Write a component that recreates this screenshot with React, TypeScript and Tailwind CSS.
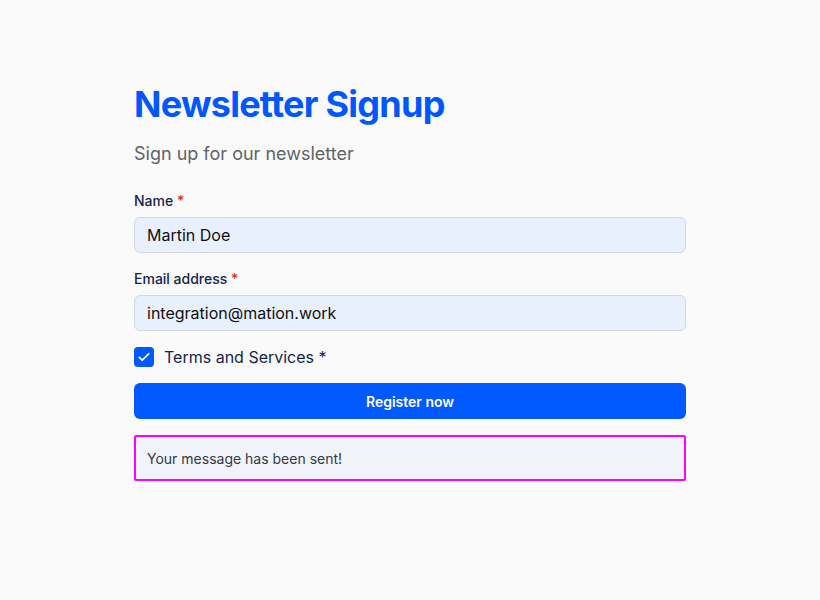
import React, { useState } from 'react';

const App = () => {
  const [name, setName] = useState('Martin Doe');
  const [email, setEmail] = useState('integration@mation.work');
  const [agreed, setAgreed] = useState(true);

  return (
    <div
      className="min-h-[600px] bg-[#fafafa] px-[134px] pt-[83px]"
      style={{ fontFamily: 'Inter, "Liberation Sans", sans-serif' }}
    >
      <div className="w-[552px]">
        {/* header */}
        <h1 className="text-[36px] leading-[42px] font-bold tracking-[-0.75px] text-[#0057ff]">
          Newsletter Signup
        </h1>
        <p className="mt-[17px] text-[18px] leading-[24px] text-[#5f6368]">Sign up for our newsletter</p>

        {/* form */}
        <form className="mt-[26px] flex flex-col" onSubmit={(e) => e.preventDefault()}>
          <label className="text-[14px] leading-[18px] font-medium text-[#14254a]">
            Name <span className="text-[#d92d20]">*</span>
          </label>
          <input
            value={name}
            onChange={(e) => setName(e.target.value)}
            className="mt-[7px] h-[36px] rounded-md border border-[#d3d8e0] bg-[#e8f0fe] px-3 text-[16px] text-[#111] outline-none"
          />

          <label className="mt-[17px] text-[14px] leading-[18px] font-medium text-[#14254a]">
            Email address <span className="text-[#d92d20]">*</span>
          </label>
          <input
            value={email}
            onChange={(e) => setEmail(e.target.value)}
            className="mt-[7px] h-[36px] rounded-md border border-[#d3d8e0] bg-[#e8f0fe] px-3 text-[16px] text-[#111] outline-none"
          />

          <label className="mt-[16px] flex items-center gap-[10px] cursor-pointer">
            <button
              type="button"
              onClick={() => setAgreed(!agreed)}
              className={`flex h-[20px] w-[20px] items-center justify-center rounded-[4px] ${
                agreed ? 'bg-[#0059ff]' : 'border border-[#d3d8e0] bg-white'
              }`}
            >
              {agreed && (
                <svg width="14" height="14" viewBox="0 0 24 24" fill="none" stroke="white" strokeWidth="3" strokeLinecap="round" strokeLinejoin="round">
                  <path d="M4 12.5l5 5L20 6.5" />
                </svg>
              )}
            </button>
            <span className="text-[16px] leading-[20px] text-[#14254a]">Terms and Services *</span>
          </label>

          <button
            type="submit"
            className="mt-[16px] h-[36px] rounded-md bg-[#0059ff] text-[14px] font-semibold text-white"
          >
            Register now
          </button>

          <div className="mt-[16px] flex h-[46px] items-center rounded-[2px] border-2 border-[#ff00ff] bg-[#f0f3f9] px-[11px] text-[14px] text-[#333a45]">
            Your message has been sent!
          </div>
        </form>
      </div>
    </div>
  );
};

export default App;
